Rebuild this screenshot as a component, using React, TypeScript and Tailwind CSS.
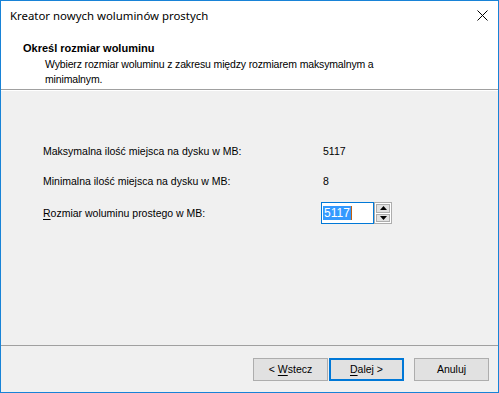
import React from "react";

export default function App() {
  const f = { fontFamily: '"Liberation Sans", Arial, sans-serif' };
  return (
    <div className="w-[499px] h-[393px] border border-[#1883d7] flex flex-col bg-white text-black overflow-hidden" style={f}>
      {/* Title bar */}
      <div className="h-[29px] shrink-0 flex items-center justify-between bg-white">
        <span className="pl-[9px] text-[11.4px] text-[#000] leading-none" style={{ fontFamily: '"Noto Sans", "Open Sans", sans-serif' }}>
          Kreator nowych woluminów prostych
        </span>
        <div className="w-[32px] h-[29px] flex items-center justify-center">
          <svg width="11" height="11" viewBox="0 0 11 11">
            <path d="M0.5 0.5 L10.5 10.5 M10.5 0.5 L0.5 10.5" stroke="#000" strokeWidth="1" fill="none" />
          </svg>
        </div>
      </div>
      {/* Header */}
      <div className="h-[59px] shrink-0 bg-white pl-[22px] pt-[12px] text-[10.5px] leading-[15px]">
        <div className="font-bold text-[11px] leading-[13px]">Określ rozmiar woluminu</div>
        <div className="pl-[22px] pt-[2px] w-[380px] tracking-[-0.15px]">
          Wybierz rozmiar woluminu z zakresu między rozmiarem maksymalnym a minimalnym.
        </div>
      </div>
      <div className="h-[1px] shrink-0 bg-[#a0a0a0]" />
      <div className="h-[1px] shrink-0 bg-white" />
      {/* Body */}
      <div className="flex-1 bg-[#f0f0f0] pt-[54px] text-[10.5px]">
        <div className="flex h-[13px] leading-[13px]">
          <span className="w-[320px] pl-[42px]">Maksymalna ilość miejsca na dysku w MB:</span>
          <span className="pl-[2px]">5117</span>
        </div>
        <div className="flex h-[13px] leading-[13px] mt-[17px]">
          <span className="w-[320px] pl-[42px]">Minimalna ilość miejsca na dysku w MB:</span>
          <span className="pl-[2px]">8</span>
        </div>
        <div className="flex h-[22px] items-center mt-[14px]">
          <span className="w-[320px] pl-[42px] leading-[13px]">
            <span className="underline underline-offset-2">R</span>ozmiar woluminu prostego w MB:
          </span>
          <div className="flex h-[22px]">
            <div className="w-[53px] h-[22px] border border-[#0078d7] bg-white flex items-center pl-[1px]">
              <span className="bg-[#3399ff] text-white leading-[14px] text-[12px] px-[1px]">5117</span>
              <span className="w-[1px] h-[14px] bg-[#c06010]" />
            </div>
            <div className="w-[18px] h-[22px] border border-[#adadad] bg-white flex flex-col p-[1px] gap-[1px]">
              <div className="flex-1 bg-[#e1e1e1] border border-[#adadad] flex items-center justify-center">
                <svg width="7" height="4" viewBox="0 0 7 4"><path d="M3.5 0 L7 4 L0 4 Z" fill="#000" /></svg>
              </div>
              <div className="flex-1 bg-[#e1e1e1] border border-[#adadad] flex items-center justify-center">
                <svg width="7" height="4" viewBox="0 0 7 4"><path d="M0 0 L7 0 L3.5 4 Z" fill="#000" /></svg>
              </div>
            </div>
          </div>
        </div>
      </div>
      <div className="h-[1px] shrink-0 bg-[#a0a0a0]" />
      {/* Buttons */}
      <div className="h-[46px] shrink-0 bg-[#f0f0f0] flex pt-[12px] pl-[252px] text-[10.5px]">
        <div className="w-[75px] h-[23px] bg-[#e1e1e1] border border-[#adadad] flex items-center justify-center">
          &lt; <span className="underline underline-offset-2 ml-[3px]">W</span>stecz
        </div>
        <div className="w-[75px] h-[23px] bg-[#e1e1e1] border-2 border-[#0078d7] flex items-center justify-center ml-[1px]">
          <span className="underline underline-offset-2">D</span>alej &gt;
        </div>
        <div className="w-[75px] h-[23px] bg-[#e1e1e1] border border-[#adadad] flex items-center justify-center ml-[10px]">
          Anuluj
        </div>
      </div>
    </div>
  );
}
